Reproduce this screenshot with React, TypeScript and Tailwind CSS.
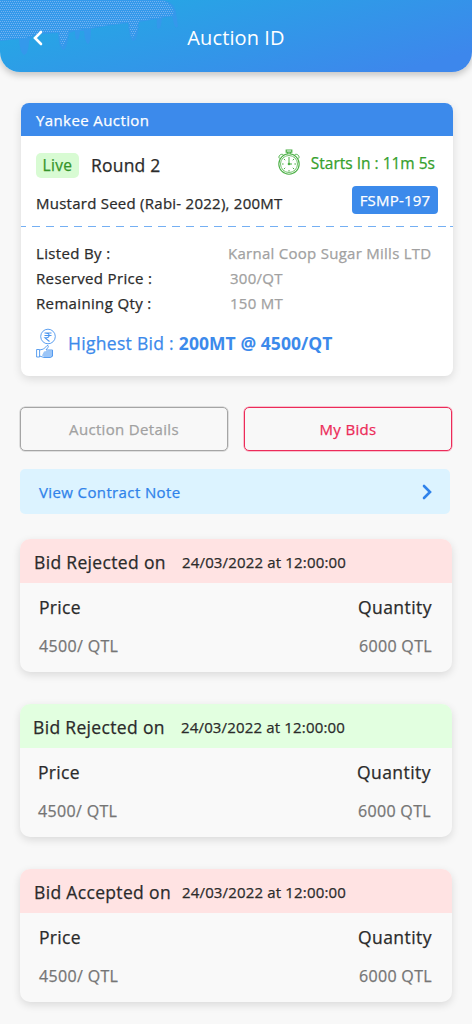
import { clsx } from "clsx";

interface Bid {
  title: string;
  date: string;
  tone: "red" | "green";
}

const bids: Bid[] = [
  { title: "Bid Rejected on", date: "24/03/2022 at 12:00:00", tone: "red" },
  { title: "Bid Rejected on", date: "24/03/2022 at 12:00:00", tone: "green" },
  { title: "Bid Accepted on", date: "24/03/2022 at 12:00:00", tone: "red" },
];

const details = [
  { label: "Listed By :", value: "Karnal Coop Sugar Mills LTD", pad: "" },
  { label: "Reserved Price :", value: "300/QT", pad: "pl-0.5" },
  { label: "Remaining Qty :", value: "150 MT", pad: "pl-0.5" },
];

function HeaderTexture() {
  return (
    <svg className="absolute left-0 top-0" width="180" height="58" viewBox="0 0 180 58">
      <defs>
        <pattern id="dots" width="4" height="4" patternUnits="userSpaceOnUse">
          <rect x="0" y="1" width="1" height="1" fill="#74b2f1" />
          <rect x="2" y="1" width="1" height="1" fill="#74b2f1" />
          <rect x="1" y="3" width="1" height="1" fill="#74b2f1" />
          <rect x="3" y="3" width="1" height="1" fill="#74b2f1" />
        </pattern>
      </defs>
      <path
        d="M0 0H162Q175 2 176 13L178 26Q176 30 174 24L172 16L162 18Q161 30 158 29Q156 28 157 19L139 22Q138 40 133 41Q130 40 128 23L106 26L91 29Q91 43 88 44Q85 43 84 31L80 31Q79 40 77 40Q75 39 75 31L69 33Q67 50 63 50Q59 48 58 33L42 34Q31 34 29 42Q28 55 24 55Q20 53 19 39L0 41Z"
        fill="#3895ec"
        fillOpacity="0.75"
      />
      <path
        d="M0 0H162Q173 3 174 15L158 18L139 21Q136 37 133 38Q130 36 129 22L89 28L69 31Q65 45 63 46Q60 44 59 32L40 33L25 38L0 40Z"
        fill="url(#dots)"
      />
    </svg>
  );
}

function StopwatchIcon() {
  return (
    <svg width="24" height="27" viewBox="0 0 24 27" fill="none" stroke="#4bb045">
      <circle cx="12" cy="15" r="10.2" strokeWidth="1.1" />
      <circle cx="12" cy="15" r="8.5" strokeWidth="0.8" />
      <path d="M9.2 1h5.6v2.2H9.2zM10.5 3.2v1.5M13.5 3.2v1.5" strokeWidth="1.2" />
      <path d="M2.4 9.5C.8 7.3 3.8 4.2 6.3 5.7M21.6 9.5c1.6-2.2-1.4-5.3-3.9-3.8" strokeWidth="1" />
      <path d="M12 8v7h3M12 21v1.6M5 15h1.6M17.4 15H19M7 10l1.2 1.2M17 10l-1.2 1.2M7 20l1.2-1.2M17 20l-1.2-1.2" strokeWidth="1" />
      <circle cx="12" cy="15" r="1.3" fill="#4bb045" stroke="none" />
    </svg>
  );
}

function HandCoinIcon() {
  return (
    <svg width="20" height="31" viewBox="0 0 20 31" fill="none" stroke="#4b95ee">
      <circle cx="12" cy="8.5" r="7.3" strokeWidth="0.9" />
      <path d="M8.5 5h7M8.5 7.5h7M9 5c5.5 0 5.5 4.8 0 4.8l4.5 3.7" strokeWidth="1.1" />
      <path d="M8 23.5l5-1h4v6l-2 1H9l-3-2z" fill="#9bc5f7" stroke="none" />
      <path d="M.6 21.5h3v7.5h-3zM3.6 22l4-1 3.5-3.5c1.5-.4 1.5 1 .8 2L10 22h6.500v6l-2 1.500H8L3.600 28" strokeWidth="0.9" />
    </svg>
  );
}

function BidCard({ bid }: { bid: Bid }) {
  const green = bid.tone === "green";
  return (
    <div className="h-[133px] overflow-hidden rounded-[10px] bg-[#f9f9f9] shadow-[0_3px_8px_rgba(0,0,0,0.12)]">
      <div
        className={clsx(
          "flex h-11 items-center",
          green ? "bg-[#e2ffe0] pl-[13px]" : "bg-[#ffe3e3] pl-3.5"
        )}
      >
        <span className="w-[148px] pt-0.5 text-[17.5px] text-[#2b2b2b]">{bid.title}</span>
        <span className="pt-[3px] text-[15px] tracking-[0.16px] text-[#2b2b2b]">{bid.date}</span>
      </div>
      <div className={clsx("pt-2", green ? "pl-[18px] pr-[21px]" : "pl-[19px] pr-5")}>
        <div className="flex h-8 justify-between text-[17.5px] leading-8 text-[#2b2b2b]">
          <span>Price</span>
          <span className="tracking-[0.45px]">Quantity</span>
        </div>
        <div className="mt-[7px] flex h-8 justify-between text-base leading-8 text-[#757575]">
          <span>4500/ QTL</span>
          <span>6000 QTL</span>
        </div>
      </div>
    </div>
  );
}

export default function App() {
  return (
    <div className="h-[1024px] w-[472px] overflow-hidden bg-[#f8f8f8] font-['Open_Sans',sans-serif] tracking-[0.021em] whitespace-nowrap [-webkit-text-stroke:0.25px_currentColor]">
      <header className="relative flex h-[72px] items-center rounded-b-[20px] bg-[linear-gradient(165deg,#27a5e5_20%,#3d87ec_90%)] pt-1 shadow-[0_3px_7px_rgba(0,0,0,0.22)]">
        <HeaderTexture />
        <button className="relative ml-8 flex w-12" aria-label="Back">
          <svg width="12" height="16" viewBox="0 0 12 16" fill="none" stroke="#fff" strokeWidth="2.6">
            <path d="M9 2L3 8l6 6" strokeLinecap="round" />
          </svg>
        </button>
        <h1 className="flex-1 pr-20 text-center text-xl font-normal tracking-[0.1px] text-white [-webkit-text-stroke:0px]">
          Auction ID
        </h1>
      </header>

      <section className="ml-[21px] mt-[31px] h-[273px] w-[432px] overflow-hidden rounded-[8px] bg-white shadow-[0_3px_10px_rgba(0,0,0,0.12)]">
        <div className="flex h-[33px] items-center bg-[#3c8aeb] pl-[15px] pt-0.5 text-[15px] tracking-[0.4px] text-white">
          Yankee Auction
        </div>
        <div className="flex h-[90px] justify-between px-[15px]">
          <div className="w-[236px] pt-[17px]">
            <div className="flex h-[25px] items-center">
              <span className="flex h-[25px] w-[43px] items-center justify-center rounded-[5px] bg-[#d8fbd3] text-[15.5px] text-[#35942a]">
                Live
              </span>
              <span className="pl-3 text-[17.5px] tracking-[0.2px] text-[#2b2b2b]">Round 2</span>
            </div>
            <div className="mt-3.5 text-[15px] leading-[22px] tracking-[0.25px] text-[#2b2b2b]">
              Mustard Seed (Rabi- 2022), 200MT
            </div>
          </div>
          <div className="flex flex-col items-end pt-[13px]">
            <div className="flex h-[27px] items-center gap-2.5 pr-[3px] text-[15.5px] tracking-normal text-[#35a02c]">
              <StopwatchIcon />
              <span className="pt-0.5">Starts In : 11m 5s</span>
            </div>
            <span className="mt-2.5 flex h-7 w-[86px] items-center justify-center rounded-[4px] bg-[#3c8aeb] pt-px text-[15px] tracking-[0.2px] text-white">
              FSMP-197
            </span>
          </div>
        </div>
        <div className="h-px bg-[repeating-linear-gradient(90deg,#74aff3_0_8px,transparent_8px_14px)] bg-position-[-3px_0]" />
        <div className="pl-[15px] pt-[13px]">
          {details.map((row) => (
            <div key={row.label} className="flex h-[25px] text-[15px] leading-[26px]">
              <span className="w-48 tracking-[0.35px] text-[#2b2b2b]">{row.label}</span>
              <span className={clsx("tracking-[0.27px] text-[#a1a1a1]", row.pad)}>{row.value}</span>
            </div>
          ))}
          <div className="mt-[13px] flex h-[31px] items-center gap-3 text-[17.5px] tracking-[0.3px] text-[#3c8aeb]">
            <HandCoinIcon />
            <span>
              Highest Bid :{" "}
              <b className="font-bold tracking-[0.06px] [-webkit-text-stroke:0px]">200MT @ 4500/QT</b>
            </span>
          </div>
        </div>
      </section>

      <div className="ml-5 mt-[31px] flex gap-4">
        <button className="h-11 w-[208px] rounded-[5px] border border-[#a5a5a5] text-[15px] text-[#a1a1a1] shadow-[0_0_0_0.5px_#c5c5c5]">
          Auction Details
        </button>
        <button className="h-11 w-[208px] rounded-[5px] border border-[#ec2b59] text-[15px] text-[#ec2b59] shadow-[0_0_0_0.5px_#f58aa4]">
          My Bids
        </button>
      </div>

      <button className="ml-5 mt-[18px] flex h-[45px] w-[430px] items-center justify-between rounded-[5px] bg-[#dcf3ff] pl-[19px] pr-[17px] text-[15px] tracking-[0.38px] text-[#2f82ea]">
        <span className="pt-0.5">View Contract Note</span>
        <svg width="12" height="16" viewBox="0 0 12 16" fill="none" stroke="#2f82ea" strokeWidth="2.6">
          <path d="M3 2l6 6-6 6" strokeLinecap="round" />
        </svg>
      </button>

      <div className="ml-5 mt-[25px] flex w-[432px] flex-col gap-8">
        {bids.map((bid, i) => (
          <BidCard key={i} bid={bid} />
        ))}
      </div>
    </div>
  );
}
